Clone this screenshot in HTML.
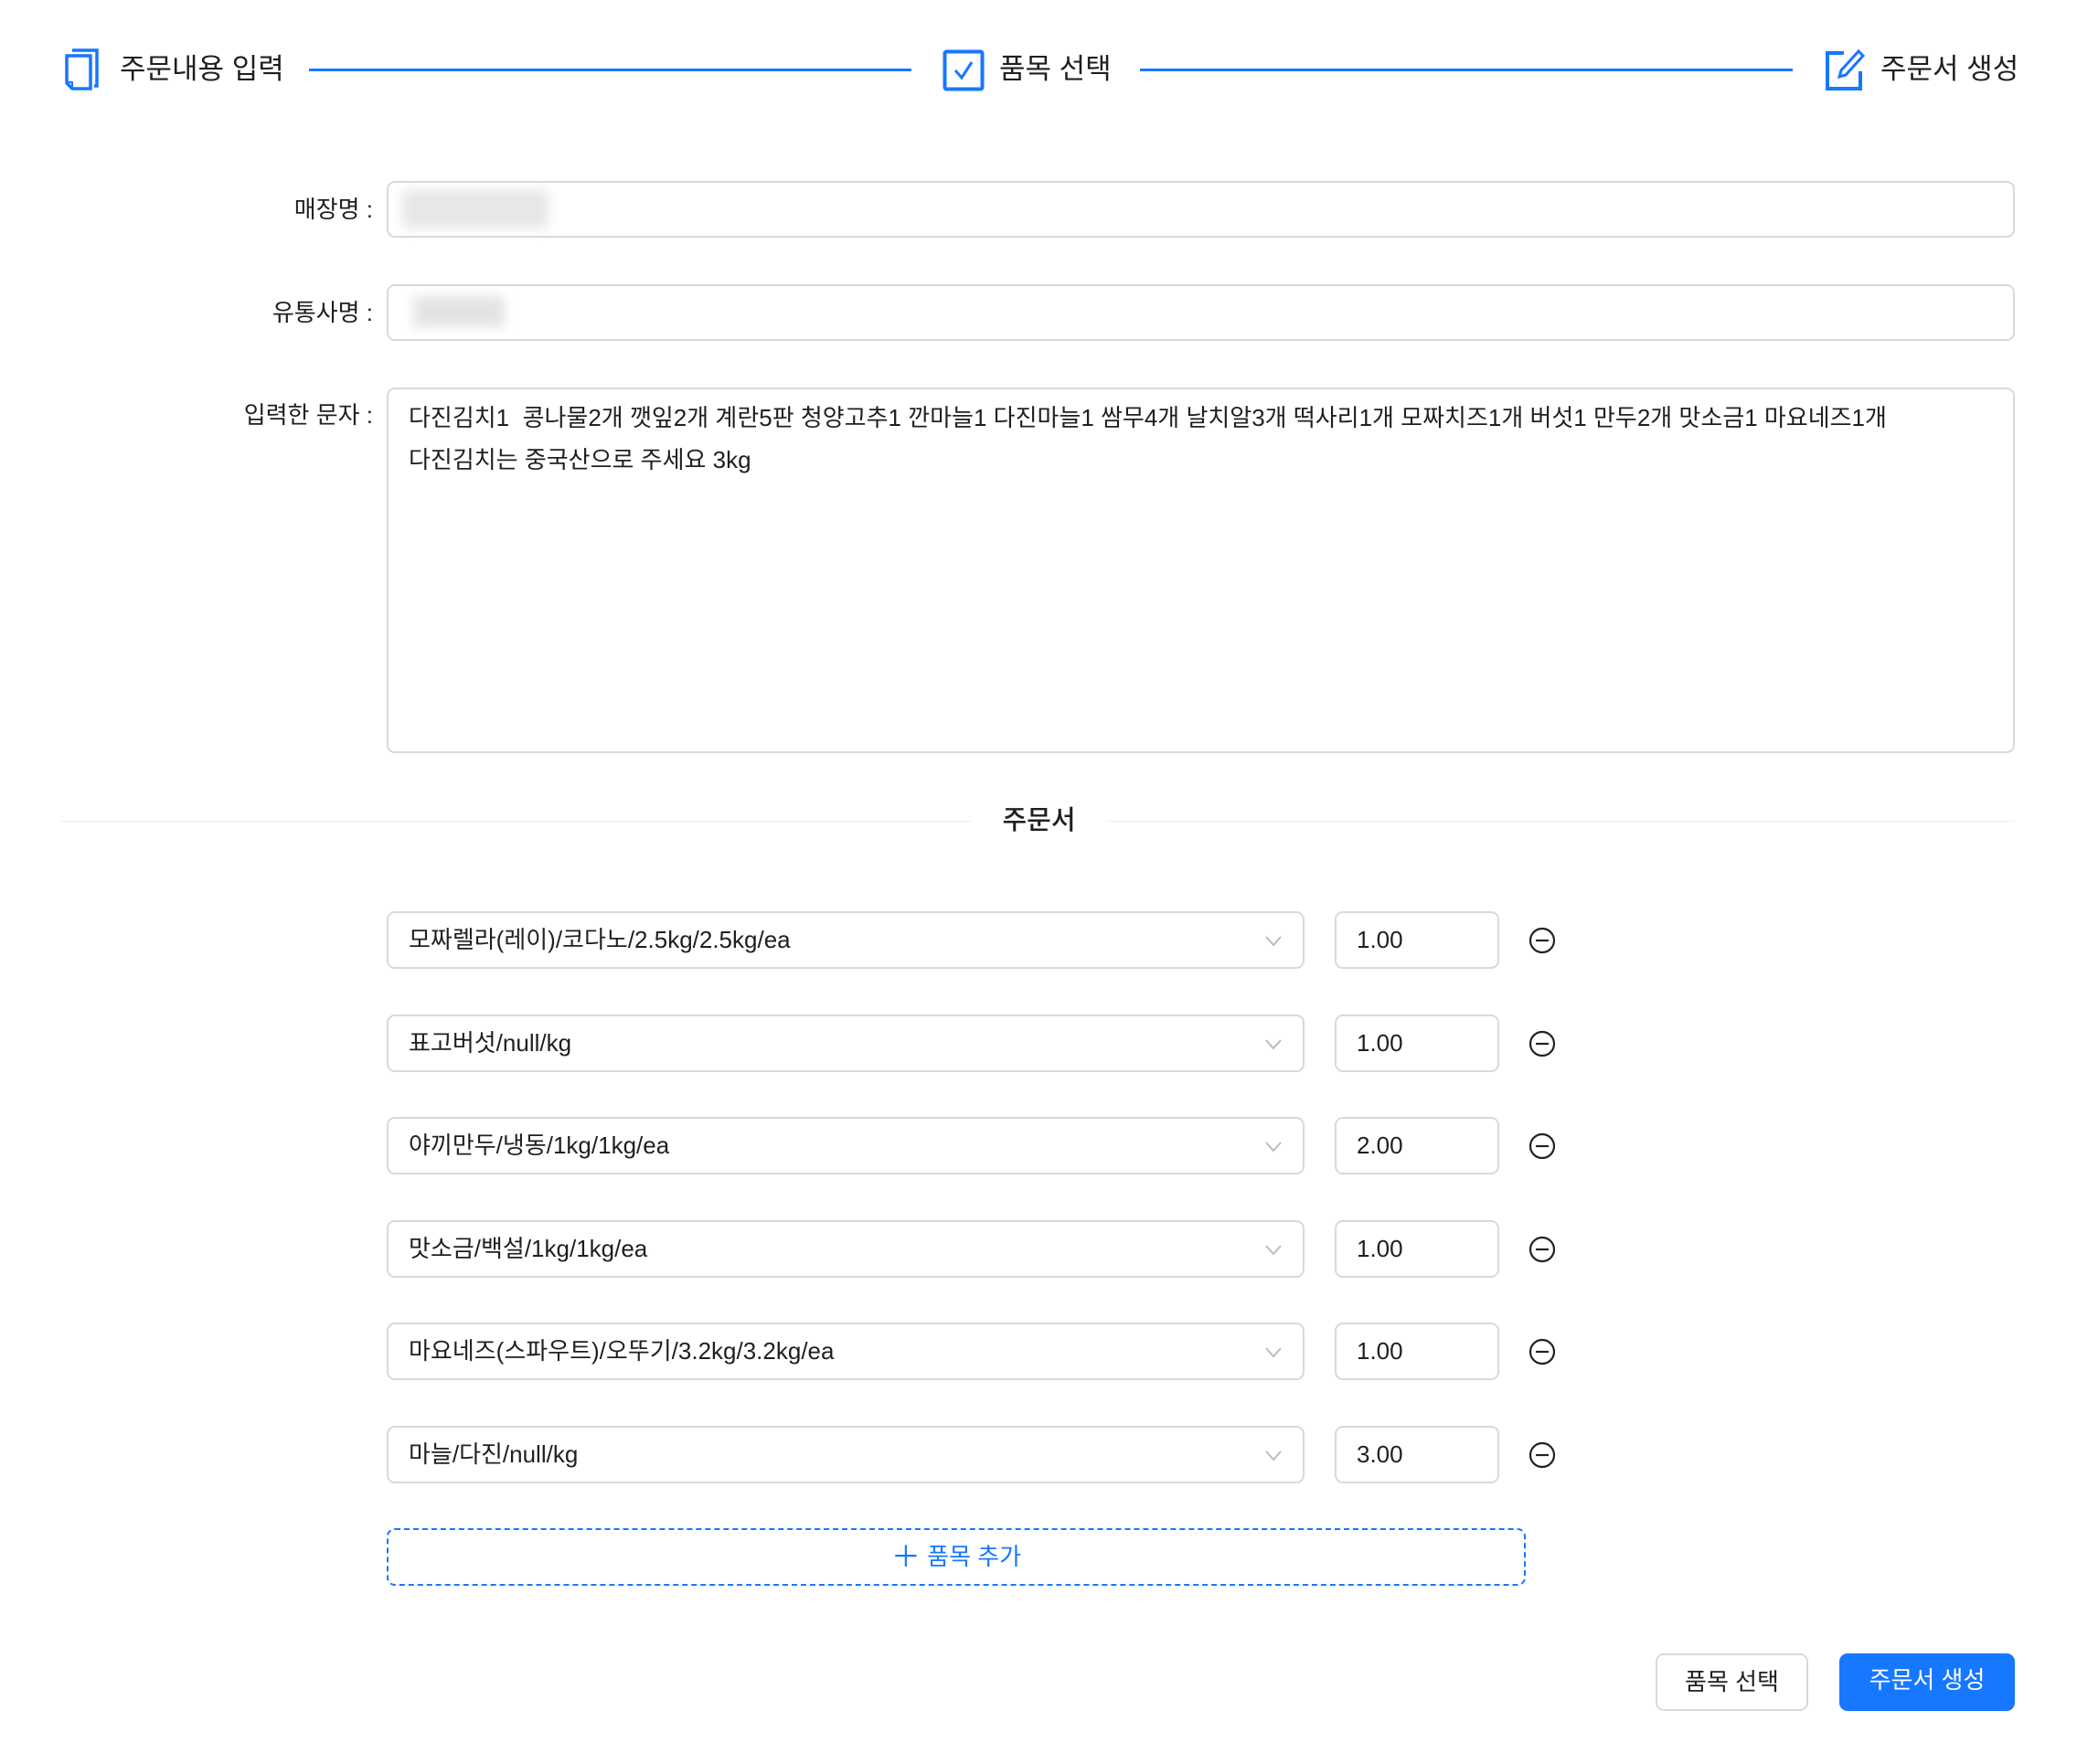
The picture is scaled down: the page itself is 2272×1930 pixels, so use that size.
<!DOCTYPE html>
<html><head><meta charset="utf-8">
<style>
*{box-sizing:border-box;margin:0;padding:0}
body{width:2272px;height:1930px;background:#fff;position:relative;overflow:hidden;font-family:"Liberation Sans","Noto Sans CJK KR",sans-serif;color:rgba(0,0,0,.88)}
.a{position:absolute}
.step{font-size:31px;line-height:40px;top:56px}
.line{height:3px;background:#1677ff;top:75px}
.lbl{font-size:26px;right:1864px;line-height:40px;text-align:right}
.box{border:2px solid #d9d9d9;border-radius:9px;background:#fff}
.sel{left:423px;width:1004px;height:63px;font-size:26px;line-height:59px;padding-left:22px}
.qty{left:1460px;width:180px;height:63px;font-size:26px;line-height:59px;padding-left:22px}
.chev{position:absolute;right:22px;top:20px}
.min{left:1672px}
.blur{background:#ddd;filter:blur(6px)}
.btn{font-size:26px;text-align:center;line-height:59px;height:63px;border-radius:9px}
</style></head><body>
<!-- steps -->
<svg class="a" style="left:70px;top:52px" width="40" height="48" viewBox="0 0 40 48"><path d="M9 3H36V42H33" fill="none" stroke="#1677ff" stroke-width="3.5"/><path d="M3 9H29V45H9L3 39Z" fill="none" stroke="#1677ff" stroke-width="3.5"/><path d="M3 38H9V45" fill="none" stroke="#1677ff" stroke-width="2"/></svg>
<div class="a step" style="left:131px">주문내용 입력</div>
<div class="a line" style="left:338px;width:659px"></div>
<svg class="a" style="left:1031px;top:54px" width="46" height="46" viewBox="0 0 46 46"><rect x="2.5" y="2.5" width="41" height="41" rx="2" fill="none" stroke="#1677ff" stroke-width="4"/><path d="M14 23L21 31L32 14" fill="none" stroke="#1677ff" stroke-width="3"/></svg>
<div class="a step" style="left:1093px">품목 선택</div>
<div class="a line" style="left:1247px;width:714px"></div>
<svg class="a" style="left:1995px;top:52px" width="46" height="48" viewBox="0 0 46 48"><path d="M22 6H4V45H40V26" fill="none" stroke="#1677ff" stroke-width="4"/><path d="M38 4L43 9L24 30L17 32L19 25Z" fill="none" stroke="#1677ff" stroke-width="3"/></svg>
<div class="a step" style="left:2057px">주문서 생성</div>

<!-- form -->
<div class="a lbl" style="top:209px">매장명 :</div>
<div class="a box" style="left:423px;top:198px;width:1781px;height:62px"></div>
<div class="a blur" style="left:440px;top:208px;width:160px;height:42px;opacity:.7"></div>
<div class="a lbl" style="top:322px">유통사명 :</div>
<div class="a box" style="left:423px;top:311px;width:1781px;height:62px"></div>
<div class="a blur" style="left:452px;top:324px;width:100px;height:34px;opacity:.8"></div>
<div class="a lbl" style="top:434px">입력한 문자 :</div>
<div class="a box" style="left:423px;top:424px;width:1781px;height:400px;font-size:26px;line-height:46px;padding:8px 22px">다진김치1&nbsp; 콩나물2개 깻잎2개 계란5판 청양고추1 깐마늘1 다진마늘1 쌈무4개 날치알3개 떡사리1개 모짜치즈1개 버섯1 만두2개 맛소금1 마요네즈1개<br>다진김치는 중국산으로 주세요 3kg</div>

<div class="a" style="left:66px;top:898px;width:997px;height:1px;background:#eee"></div>
<div class="a" style="left:1210px;top:898px;width:994px;height:1px;background:#eee"></div>
<div class="a" style="left:1063px;width:147px;top:878px;text-align:center;font-size:29px;line-height:40px;font-weight:500">주문서</div>

<!-- rows -->
<div class="a box sel" style="top:997px">모짜렐라(레이)/코다노/2.5kg/2.5kg/ea<svg class="chev" width="20" height="20" viewBox="0 0 20 20"><path d="M2 6L10 15L18 6" fill="none" stroke="#bbb" stroke-width="2"/></svg></div>
<div class="a box qty" style="top:997px">1.00</div>
<div class="a box sel" style="top:1110px">표고버섯/null/kg<svg class="chev" width="20" height="20" viewBox="0 0 20 20"><path d="M2 6L10 15L18 6" fill="none" stroke="#bbb" stroke-width="2"/></svg></div>
<div class="a box qty" style="top:1110px">1.00</div>
<div class="a box sel" style="top:1222px">야끼만두/냉동/1kg/1kg/ea<svg class="chev" width="20" height="20" viewBox="0 0 20 20"><path d="M2 6L10 15L18 6" fill="none" stroke="#bbb" stroke-width="2"/></svg></div>
<div class="a box qty" style="top:1222px">2.00</div>
<div class="a box sel" style="top:1335px">맛소금/백설/1kg/1kg/ea<svg class="chev" width="20" height="20" viewBox="0 0 20 20"><path d="M2 6L10 15L18 6" fill="none" stroke="#bbb" stroke-width="2"/></svg></div>
<div class="a box qty" style="top:1335px">1.00</div>
<div class="a box sel" style="top:1447px">마요네즈(스파우트)/오뚜기/3.2kg/3.2kg/ea<svg class="chev" width="20" height="20" viewBox="0 0 20 20"><path d="M2 6L10 15L18 6" fill="none" stroke="#bbb" stroke-width="2"/></svg></div>
<div class="a box qty" style="top:1447px">1.00</div>
<div class="a box sel" style="top:1560px">마늘/다진/null/kg<svg class="chev" width="20" height="20" viewBox="0 0 20 20"><path d="M2 6L10 15L18 6" fill="none" stroke="#bbb" stroke-width="2"/></svg></div>
<div class="a box qty" style="top:1560px">3.00</div>

<svg class="a min" style="top:1014px" width="30" height="30" viewBox="0 0 30 30"><circle cx="15" cy="15" r="13" fill="none" stroke="#222" stroke-width="2.2"/><path d="M8 15H22" stroke="#222" stroke-width="2.2"/></svg>
<svg class="a min" style="top:1127px" width="30" height="30" viewBox="0 0 30 30"><circle cx="15" cy="15" r="13" fill="none" stroke="#222" stroke-width="2.2"/><path d="M8 15H22" stroke="#222" stroke-width="2.2"/></svg>
<svg class="a min" style="top:1239px" width="30" height="30" viewBox="0 0 30 30"><circle cx="15" cy="15" r="13" fill="none" stroke="#222" stroke-width="2.2"/><path d="M8 15H22" stroke="#222" stroke-width="2.2"/></svg>
<svg class="a min" style="top:1352px" width="30" height="30" viewBox="0 0 30 30"><circle cx="15" cy="15" r="13" fill="none" stroke="#222" stroke-width="2.2"/><path d="M8 15H22" stroke="#222" stroke-width="2.2"/></svg>
<svg class="a min" style="top:1464px" width="30" height="30" viewBox="0 0 30 30"><circle cx="15" cy="15" r="13" fill="none" stroke="#222" stroke-width="2.2"/><path d="M8 15H22" stroke="#222" stroke-width="2.2"/></svg>
<svg class="a min" style="top:1577px" width="30" height="30" viewBox="0 0 30 30"><circle cx="15" cy="15" r="13" fill="none" stroke="#222" stroke-width="2.2"/><path d="M8 15H22" stroke="#222" stroke-width="2.2"/></svg>

<div class="a" style="left:423px;top:1672px;width:1246px;height:63px;border:2px dashed #1677ff;border-radius:9px;color:#1677ff;font-size:26px;line-height:59px;text-align:center"><span style="font-size:32px;vertical-align:-2px">＋</span> 품목 추가</div>

<div class="a box btn" style="left:1811px;top:1809px;width:167px">품목 선택</div>
<div class="a btn" style="left:2012px;top:1809px;width:192px;background:#1677ff;color:#fff">주문서 생성</div>
</body></html>
